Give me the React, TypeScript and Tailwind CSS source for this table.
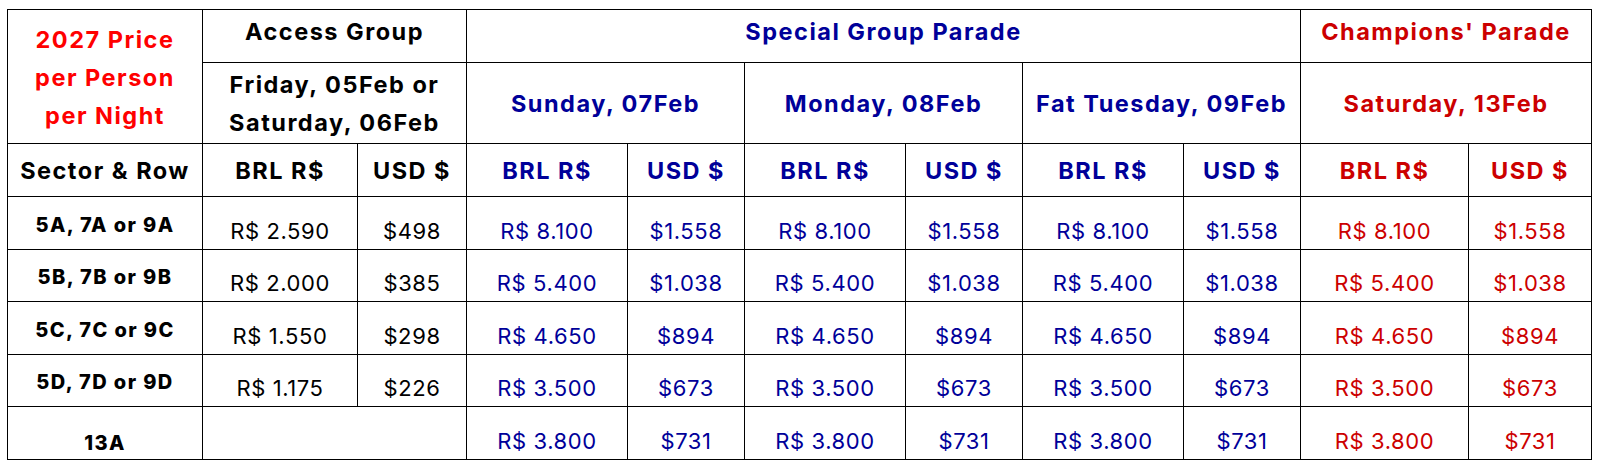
import React from "react";

type Row = {
  label: string;
  access?: [string, string];
  prices: [string, string];
};

const rows: Row[] = [
  { label: "5A, 7A or 9A", access: ["R$ 2.590", "$498"], prices: ["R$ 8.100", "$1.558"] },
  { label: "5B, 7B or 9B", access: ["R$ 2.000", "$385"], prices: ["R$ 5.400", "$1.038"] },
  { label: "5C, 7C or 9C", access: ["R$ 1.550", "$298"], prices: ["R$ 4.650", "$894"] },
  { label: "5D, 7D or 9D", access: ["R$ 1.175", "$226"], prices: ["R$ 3.500", "$673"] },
  { label: "13A", prices: ["R$ 3.800", "$731"] },
];

const cell = "border border-black text-center p-0";
const blue = "text-[#000099]";
const red = "text-[#cc0000]";

export default function App() {
  return (
    <div
      className="bg-white w-[1598px] h-[470px] pl-[7px] pt-[9px]"
      style={{ fontFamily: "Inter, 'Liberation Sans', sans-serif" }}
    >
      <table className="table-fixed border-collapse w-[1584px]">
        <colgroup>
          <col className="w-[195px]" />
          <col className="w-[155px]" />
          <col className="w-[109px]" />
          <col className="w-[161px]" />
          <col className="w-[117px]" />
          <col className="w-[161px]" />
          <col className="w-[117px]" />
          <col className="w-[161px]" />
          <col className="w-[117px]" />
          <col className="w-[168px]" />
          <col className="w-[123px]" />
        </colgroup>
        <thead className="font-bold text-[23.5px] leading-[38px] tracking-[1.5px]">
          <tr className="h-[53px]">
            <th rowSpan={2} className={`${cell} text-[#ff0000] pt-[2px]`}>
              2027 Price
              <br />
              per Person
              <br />
              per Night
            </th>
            <th colSpan={2} className={`${cell} text-black pb-[8px]`}>
              Access Group
            </th>
            <th colSpan={6} className={`${cell} ${blue} pb-[8px]`}>
              Special Group Parade
            </th>
            <th colSpan={2} className={`${cell} ${red} pb-[8px]`}>
              Champions' Parade
            </th>
          </tr>
          <tr className="h-[81px]">
            <th colSpan={2} className={`${cell} text-black pt-[2px]`}>
              Friday, 05Feb or
              <br />
              Saturday, 06Feb
            </th>
            <th colSpan={2} className={`${cell} ${blue} pt-[2px]`}>
              Sunday, 07Feb
            </th>
            <th colSpan={2} className={`${cell} ${blue} pt-[2px]`}>
              Monday, 08Feb
            </th>
            <th colSpan={2} className={`${cell} ${blue} pt-[2px]`}>
              Fat Tuesday, 09Feb
            </th>
            <th colSpan={2} className={`${cell} ${red} pt-[2px]`}>
              Saturday, 13Feb
            </th>
          </tr>
          <tr className="h-[53px]">
            <th className={`${cell} text-black pt-[2px]`}>Sector &amp; Row</th>
            <th className={`${cell} text-black pt-[2px]`}>BRL R$</th>
            <th className={`${cell} text-black pt-[2px]`}>USD $</th>
            {[0, 1, 2].map((i) => (
              <React.Fragment key={i}>
                <th className={`${cell} ${blue} pt-[2px]`}>BRL R$</th>
                <th className={`${cell} ${blue} pt-[2px]`}>USD $</th>
              </React.Fragment>
            ))}
            <th className={`${cell} ${red} pt-[2px]`}>BRL R$</th>
            <th className={`${cell} ${red} pt-[2px]`}>USD $</th>
          </tr>
        </thead>
        <tbody className="text-[22px] leading-[30px] tracking-[0.6px]">
          {rows.map((r) => {
            const last = r.label === "13A";
            const pad = "pt-[16px]";
            return (
              <tr key={r.label} className={last ? "h-[53px]" : "h-[52.5px]"}>
                <td
                  className={`${cell} font-extrabold text-[20px] tracking-[1.4px] text-black ${
                    last ? "pt-[20px]" : "pt-[4px]"
                  }`}
                >
                  {r.label}
                </td>
                {r.access ? (
                  <>
                    <td className={`${cell} text-black ${pad}`}>{r.access[0]}</td>
                    <td className={`${cell} text-black ${pad}`}>{r.access[1]}</td>
                  </>
                ) : (
                  <td colSpan={2} className={cell}></td>
                )}
                {[0, 1, 2].map((i) => (
                  <React.Fragment key={i}>
                    <td className={`${cell} ${blue} ${pad}`}>{r.prices[0]}</td>
                    <td className={`${cell} ${blue} ${pad}`}>{r.prices[1]}</td>
                  </React.Fragment>
                ))}
                <td className={`${cell} ${red} ${pad}`}>{r.prices[0]}</td>
                <td className={`${cell} ${red} ${pad}`}>{r.prices[1]}</td>
              </tr>
            );
          })}
        </tbody>
      </table>
    </div>
  );
}
